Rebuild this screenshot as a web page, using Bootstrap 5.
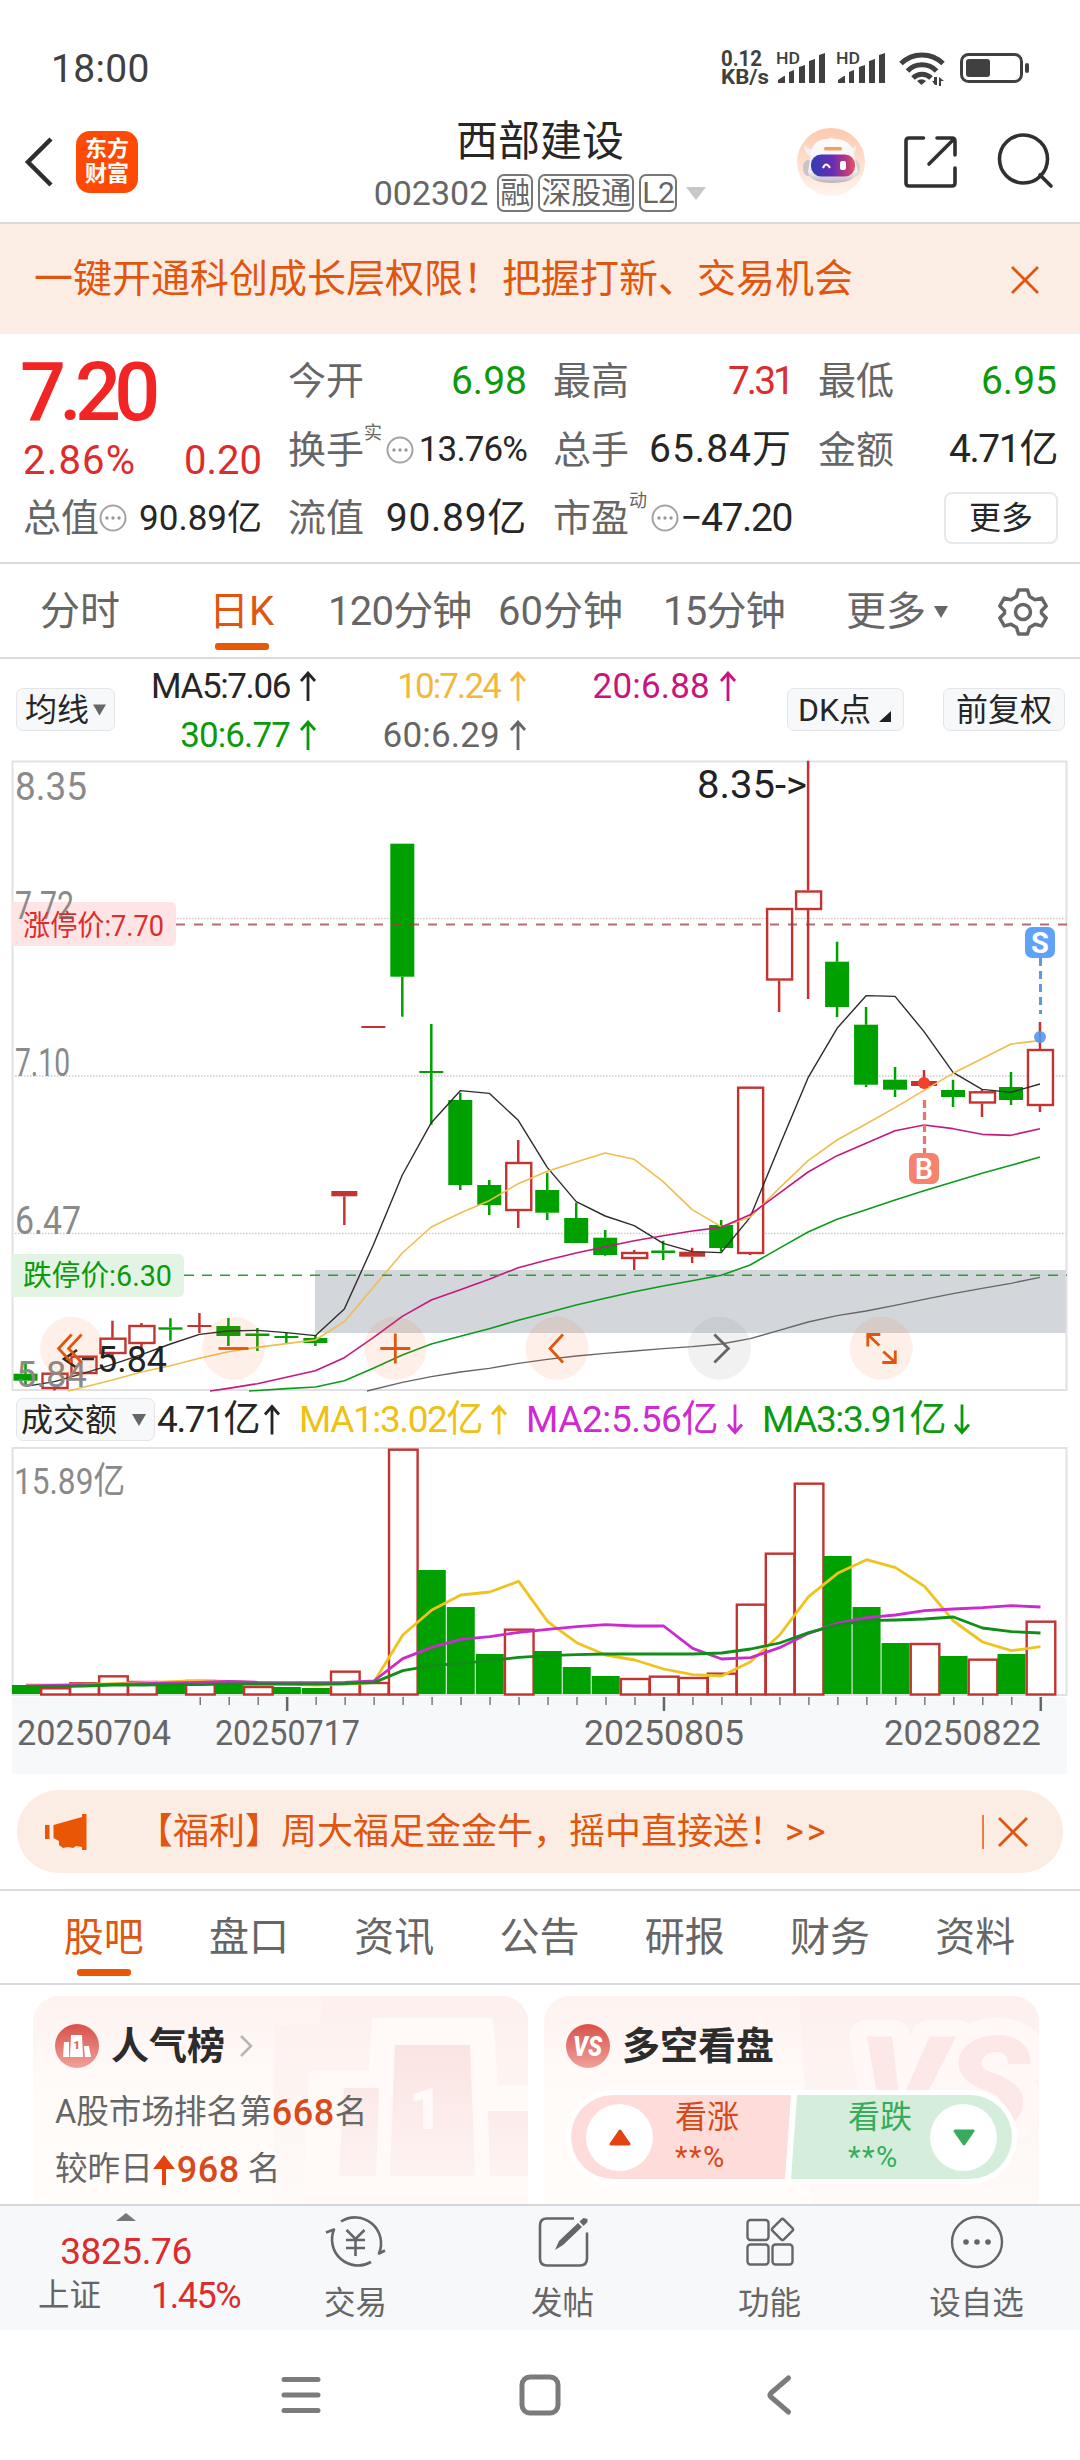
<!DOCTYPE html>
<html lang="zh-CN">
<head>
<meta charset="utf-8">
<meta name="viewport" content="width=device-width, initial-scale=1">
<title>西部建设 002302</title>
<link rel="stylesheet" href="https://cdn.jsdelivr.net/npm/bootstrap@5.3.0/dist/css/bootstrap.min.css">
<style>
:root{--or:#e0560f;--up:#dc2c2c;--dn:#0c9a0c;--ink:#262626;--gr:#666;--ln:#d9dadb}
html,body{margin:0;background:#fff}
body{font-family:Roboto,"Noto Sans CJK SC",sans-serif;color:var(--ink);line-height:1;width:1080px;overflow-x:hidden}
svg{display:block;flex:none}
svg text{font-family:Roboto,"Noto Sans CJK SC",sans-serif}
.screen{height:2460px;overflow:hidden}
.up{color:var(--up)}.dn{color:var(--dn)}.gr{color:var(--gr)}.or{color:var(--or)}
.statusbar{height:100px;padding:36px 40px 0 51px;color:#404040}
.clock{font-size:39px;letter-spacing:.3px;padding-top:2px}
.apphead{height:124px;display:grid;grid-template-columns:1fr auto 1fr;border-bottom:2px solid var(--ln);padding-top:2px}
.brand{width:62px;height:62px;border-radius:14px;background:#ff4a05;color:#fff;font-size:22px;font-weight:700;line-height:25px;text-align:center;padding-top:5px;margin-left:23px}
.stock{font-size:42px;height:48px;line-height:48px}
.code{font-size:34px}
.tagbox{border:2px solid #777;border-radius:7px;height:38px;font-size:30px;line-height:33px;padding:0 1px;color:var(--gr)}
.notice{height:110px;background:#fcede4;padding:1px 41px 0 34px;font-size:39px}
.quote{height:230px;padding:13px 23px 0 23px;gap:26px;border-bottom:2px solid var(--ln)}
.qcol{flex:1 1 0;min-width:0}
.qrow{height:68.5px;white-space:nowrap}
.qrow .k{font-size:38px;color:var(--gr)}
.qrow .v{font-size:39px}
.qrow .vs{font-size:35px}
.price{height:88px;font-size:81px;font-weight:500;color:#f22424;letter-spacing:-6.8px;line-height:92px;margin-left:-3px}
.chg{height:49px;font-size:40px;padding-top:3px}
.sup{font-size:18px;align-self:flex-start;margin-top:8px;color:var(--gr)}
.morebtn{width:114px;height:52px;border:2px solid #e6e8ea;border-radius:8px;font-size:32px;margin-right:-1px;margin-left:auto}
.periods{height:95px;border-bottom:2px solid var(--ln);font-size:40px;color:var(--gr);padding:3px 0 0 40px;white-space:nowrap}
.periods>*{position:relative}
.cur::after{content:"";position:absolute;left:50%;width:54px;height:7px;border-radius:3px;background:#e85806;transform:translateX(-50%)}
.periods .cur::after{bottom:-18px}
.malegend{height:101px;padding-left:16px;font-size:35px}
.chip{height:43px;border:1px solid #e3e5e8;border-radius:7px;background:#f7f8fa;font-size:32px;white-space:nowrap}
.magrid{display:grid;grid-template-columns:203px 210px 210px;grid-auto-rows:49px;padding-top:2px}
.magrid>div{display:flex;align-items:center;justify-content:flex-end;gap:8px}
.t7{letter-spacing:-1.4px}.t8{letter-spacing:.2px}
.volhead{height:55px;padding-left:16px;font-size:37px;white-space:nowrap}
.promo{margin:12px 17px 16px;height:83px;border-radius:42px;background:#fcede4;font-size:36px;padding:1px 35px 0 27px;white-space:nowrap}
.subtabs{height:96px;border-top:2px solid var(--ln);border-bottom:2px solid var(--ln);font-size:40px;color:var(--gr);padding:2px 32px 0 31px}
.subtabs>div{flex:1;text-align:center;position:relative}
.subtabs .cur::after{bottom:-18px}
.infos{height:219px;padding:11px 41px 0 33px;gap:16px;overflow:hidden}
.tile{flex:1;height:230px;border-radius:26px;position:relative;overflow:hidden;background:linear-gradient(#fef3f1,#fffbf9 45%,#fffcfa)}
.tile>.art{position:absolute;left:0;top:0}
.tile>div{position:relative}
.tiletitle{font-size:38px;font-weight:700;padding:28px 0 0 22px;height:72px;color:#2c2c2c}
.tline{font-size:32.6px;color:var(--gr);padding-left:22px;height:57px;white-space:nowrap}
.tline b{color:#d84a1b;font-size:36px;font-weight:500;letter-spacing:.5px}
.votes{margin:22px 22px 0;height:94px;border-radius:47px;background:#fff;padding:5px}
.half{height:84px;font-size:32px;line-height:40px}
.half.l{width:220px;border-radius:42px 0 0 42px;background:#fddcda;color:#d8481a;clip-path:polygon(0 0,100% 0,calc(100% - 6px) 100%,0 100%);padding-left:15px}
.half.r{width:221px;border-radius:0 42px 42px 0;background:#d5eedc;color:#37ac5c;clip-path:polygon(6px 0,100% 0,100% 100%,0 100%);padding-right:15px}
.half small{font-size:29px;display:block;letter-spacing:1.5px}
.knob{width:67px;height:67px;border-radius:50%;background:#fff}
.dock{height:126px;border-top:2px solid #d3d6da;background:#f7f8fa;font-size:31.5px;color:var(--gr)}
.dock .idx{width:252px}
.dock .it{width:207px;padding-top:8px}
.dock .it span{margin-top:18px}
.sysnav{height:130px;gap:183.5px}
</style>
</head>
<body>
<div class="screen d-flex flex-column">
  <div class="statusbar d-flex align-items-center justify-content-between flex-shrink-0">
    <span class="clock">18:00</span>
    <svg width="320" height="50" viewBox="720 43 320 50" fill="#404040">
      <g font-weight="700"><text x="721" y="66" font-size="22" textLength="41" lengthAdjust="spacingAndGlyphs">0.12</text><text x="721" y="84" font-size="21" textLength="48" lengthAdjust="spacingAndGlyphs">KB/s</text></g>
      <g id="sim"><text x="776" y="64" font-size="17" font-weight="500" textLength="24" lengthAdjust="spacingAndGlyphs">HD</text>
      <path d="M778 83v-3l6-4h1v7zM789 72l5-2v13h-5zM799 67l6-2v18h-6zM809 61l6-2v24h-6zM819 55l6-2v30h-6z"/></g>
      <use href="#sim" x="60"/>
      <g fill="none" stroke="#404040" stroke-width="5"><path d="M901 63.500a30 30 0 0 1 42 0"/><path d="M907.500 71a20 20 0 0 1 29 0"/><path d="M913 78a12.500 12.500 0 0 1 18 0"/></g>
      <path d="M917 81a7 7 0 0 1 9 0l-4.500 4z"/><path d="M932 81h2v-4h3v8h-2zM939 77l5 4h-3v5h-2z"/>
      <rect x="961.500" y="54.500" width="60" height="27" rx="7" fill="none" stroke="#404040" stroke-width="3"/><rect x="966" y="59" width="24" height="18" rx="3"/><rect x="1025" y="63" width="4" height="10" rx="2"/>
    </svg>
  </div>

  <header class="apphead flex-shrink-0">
    <div class="d-flex align-items-center ps-4">
      <svg width="29" height="50" viewBox="0 0 29 50" fill="none" stroke="#2e2e2e" stroke-width="4.500"><path d="M27 2L4 25l23 23"/></svg>
      <div class="brand">东方<br>财富</div>
    </div>
    <div class="d-flex flex-column align-items-center pt-3">
      <div class="stock">西部建设</div>
      <div class="d-flex align-items-center gr mt-2" style="gap:5px">
        <span class="code me-1">002302</span><span class="tagbox">融</span><span class="tagbox">深股通</span><span class="tagbox" style="letter-spacing:-.5px">L2</span>
        <svg width="20" height="13" viewBox="0 0 20 13" class="ms-1"><path d="M0 0h20L10 13z" fill="#c8c8c8"/></svg>
      </div>
    </div>
    <div class="d-flex align-items-center justify-content-end">
      <svg width="260" height="72" viewBox="794 126 260 72">
        <defs><linearGradient id="halo" x2="0" y2="1"><stop stop-color="#fdc9ad"/><stop offset="1" stop-color="#fff4ee"/></linearGradient>
        <linearGradient id="visor"><stop stop-color="#2f3fb0"/><stop offset=".5" stop-color="#6a2bb4"/><stop offset=".85" stop-color="#c43c7c"/><stop offset="1" stop-color="#e05a60"/></linearGradient>
        <linearGradient id="shell" x2="0" y2="1"><stop stop-color="#fdfdfe"/><stop offset=".75" stop-color="#f0edf0"/><stop offset="1" stop-color="#b9b4ba"/></linearGradient></defs>
        <circle cx="831" cy="162" r="34" fill="url(#halo)"/>
        <path d="M804 145c0 8 5 11 9 12l6-9c-7 2-12 1-15-3zM856 145c1 8-4 11-8 12l-6-9c7 2 11 1 14-3z" fill="#f3efef"/>
        <ellipse cx="808" cy="168" rx="5" ry="8" fill="#c9c4c8"/><ellipse cx="855" cy="168" rx="5" ry="8" fill="#d5d0d4"/>
        <path d="M810 160q0-21 18-21 3-2 6 0 20 0 21 21l3 12q-4 11-26 11t-24-11z" fill="url(#shell)"/>
        <rect x="824" y="147" width="18" height="3.500" rx="1.500" fill="#f0a25c"/>
        <rect x="811" y="154.500" width="44" height="22" rx="10" fill="url(#visor)"/>
        <path d="M823 168q3-7 7 0" fill="none" stroke="#fff" stroke-width="2"/><rect x="840" y="161" width="6" height="9" rx="2" fill="#fff"/>
        <g fill="none" stroke="#303030" stroke-width="3.600" stroke-linecap="round"><path d="M923.500 138H909q-3 0-3 3v42q0 3 3 3h43q3 0 3-3v-15M937 138h15q3 0 3 3v14M954 139l-25 25"/>
        <circle cx="1023.500" cy="159" r="24"/><path d="M1040 175l11 11"/></g>
      </svg>
      <span style="width:26px"></span>
    </div>
  </header>

  <div class="notice or d-flex align-items-center justify-content-between flex-shrink-0">
    <span>一键开通科创成长层权限！把握打新、交易机会</span>
    <svg width="28" height="28" viewBox="0 0 28 28" stroke="#e0560f" stroke-width="2.800"><path d="M1 1l26 26M27 1L1 27"/></svg>
  </div>

  <section class="quote d-flex flex-shrink-0">
    <div class="qcol">
      <div class="price">7.20</div>
      <div class="chg up d-flex justify-content-between align-items-center"><span style="letter-spacing:1.200px">2.86%</span><span>0.20</span></div>
      <div class="qrow d-flex align-items-center"><span class="k">总值</span><svg class="dots" width="28" height="28" viewBox="0 0 28 28"><use href="#more"/></svg><span class="vs ms-auto">90.89亿</span></div>
    </div>
    <div class="qcol">
      <div class="qrow d-flex align-items-center justify-content-between"><span class="k">今开</span><span class="v dn">6.98</span></div>
      <div class="qrow d-flex align-items-center"><span class="k">换手</span><span class="sup">实</span><svg width="28" height="28" viewBox="0 0 28 28" class="ms-1"><use href="#more"/></svg><span class="vs ms-auto" style="letter-spacing:-.9px">13.76%</span></div>
      <div class="qrow d-flex align-items-center justify-content-between"><span class="k">流值</span><span class="v" style="letter-spacing:.7px">90.89亿</span></div>
    </div>
    <div class="qcol">
      <div class="qrow d-flex align-items-center justify-content-between"><span class="k">最高</span><span class="v up" style="letter-spacing:-3px">7.31</span></div>
      <div class="qrow d-flex align-items-center justify-content-between"><span class="k">总手</span><span class="v" style="letter-spacing:1px">65.84万</span></div>
      <div class="qrow d-flex align-items-center"><span class="k">市盈</span><span class="sup">动</span><svg width="28" height="28" viewBox="0 0 28 28" class="ms-1"><use href="#more"/></svg><span class="v ms-auto t7">−47.20</span></div>
    </div>
    <div class="qcol">
      <div class="qrow d-flex align-items-center justify-content-between"><span class="k">最低</span><span class="v dn">6.95</span></div>
      <div class="qrow d-flex align-items-center justify-content-between"><span class="k">金额</span><span class="v t7">4.71亿</span></div>
      <div class="qrow d-flex align-items-center"><div class="morebtn d-flex align-items-center justify-content-center">更多</div></div>
    </div>
  </section>
  <svg width="0" height="0" class="position-absolute"><defs><g id="more"><circle cx="14" cy="14" r="12.500" fill="none" stroke="#a3a3a3" stroke-width="2"/><g fill="#999"><circle cx="8" cy="14" r="1.700"/><circle cx="14" cy="14" r="1.700"/><circle cx="20" cy="14" r="1.700"/></g></g></defs></svg>

  <nav class="periods d-flex align-items-center flex-shrink-0">
    <span style="width:169px">分时</span><span class="or cur" style="margin-right:54px">日K</span>
    <span style="width:170px;letter-spacing:-.8px">120分钟</span><span style="width:165px">60分钟</span><span style="width:183px;letter-spacing:-.8px">15分钟</span><span>更多</span>
    <svg width="14" height="12" viewBox="0 0 14 12" class="ms-2"><path d="M0 0h14L7 12z" fill="#666"/></svg>
    <svg width="50" height="50" viewBox="-25 -25 50 50" style="margin-left:50px" fill="none" stroke="#666" stroke-width="3.500" stroke-linejoin="round"><path d="M-4.500-22h9l2 6.500 5.500 3.200 6.700-1.600 4.500 7.900-4.700 4.800v2.400l4.700 4.800-4.500 7.900-6.700-1.600-5.500 3.200-2 6.500h-9l-2-6.500-5.500-3.200-6.700 1.600-4.500-7.900 4.700-4.800v-2.400l-4.700-4.800 4.500-7.900 6.700 1.600 5.500-3.200z"/><circle r="7.500"/></svg>
  </nav>

  <div class="malegend d-flex align-items-center flex-shrink-0">
    <div class="chip d-flex align-items-center" style="width:99px;padding-left:8px">均线<svg width="13" height="12" viewBox="0 0 14 12" class="ms-1"><path d="M0 0h14L7 12z" fill="#666"/></svg></div>
    <div class="magrid">
      <div><span class="t7">MA5:7.06</span><svg width="20" height="30" viewBox="0 0 20 30"><use href="#arr"/></svg></div>
      <div style="color:#f3b73c"><span style="letter-spacing:-1.900px">10:7.24</span><svg width="20" height="30" viewBox="0 0 20 30"><use href="#arr"/></svg></div>
      <div style="color:#c9147e"><span class="t8">20:6.88</span><svg width="20" height="30" viewBox="0 0 20 30"><use href="#arr"/></svg></div>
      <div class="dn"><span style="letter-spacing:-.9px">30:6.77</span><svg width="20" height="30" viewBox="0 0 20 30"><use href="#arr"/></svg></div>
      <div class="gr"><span class="t8">60:6.29</span><svg width="20" height="30" viewBox="0 0 20 30"><use href="#arr"/></svg></div>
    </div>
    <div class="chip d-flex align-items-center" style="width:117px;margin-left:49px;padding-left:10px">DK点<svg width="12" height="11" viewBox="0 0 12 11" class="align-self-end mb-2 ms-2"><path d="M12 0v11H0z" fill="#222"/></svg></div>
    <div class="chip d-flex align-items-center justify-content-center" style="width:122px;margin-left:39px">前复权</div>
  </div>
  <svg width="0" height="0" class="position-absolute"><defs><path id="arr" d="M10 30V2M3 10l7-8 7 8" fill="none" stroke="currentColor" stroke-width="2.800"/></defs></svg>

  <svg id="kchart" class="flex-shrink-0" width="1080" height="632" viewBox="0 760 1080 632"></svg>

  <div class="volhead d-flex align-items-center flex-shrink-0">
    <div class="chip d-flex align-items-center" style="width:139px;padding-left:4px">成交额<svg width="14" height="12" viewBox="0 0 14 12" style="margin-left:15px"><path d="M0 0h14L7 12z" fill="#666"/></svg></div>
    <span style="width:105px;margin-left:2px" class="t7">4.71亿</span><svg width="20" height="31" viewBox="0 0 20 30"><use href="#arr"/></svg>
    <span class="d-flex align-items-center justify-content-between" style="width:210px;margin-left:17px;color:#edc214"><span class="t7">MA1:3.02亿</span><svg width="20" height="31" viewBox="0 0 20 30"><use href="#arr"/></svg></span>
    <span class="d-flex align-items-center justify-content-between" style="width:219px;margin-left:17px;color:#cf2ad2"><span style="letter-spacing:-.4px">MA2:5.56亿</span><svg width="20" height="31" viewBox="0 0 20 30"><use href="#arr" transform="rotate(180 10 15)"/></svg></span>
    <span class="d-flex align-items-center justify-content-between dn" style="width:210px;margin-left:17px"><span class="t7">MA3:3.91亿</span><svg width="20" height="31" viewBox="0 0 20 30"><use href="#arr" transform="rotate(180 10 15)"/></svg></span>
  </div>

  <svg id="vchart" class="flex-shrink-0" width="1080" height="331" viewBox="0 1447 1080 331"></svg>

  <div class="promo or d-flex align-items-center flex-shrink-0">
    <svg width="43" height="38" viewBox="44 1813 43 38" fill="#e95606"><path d="M45 1825h4.500v14H45zM53.500 1825L82 1817v-3h4.500v36H82v-3l-6-1-3 2-5-1-5 1-4-3v-4l-5.500-3z"/></svg>
    <span style="margin-left:50px">【福利】周大福足金金牛，摇中直接送！<span style="letter-spacing:3px">&gt;&gt;</span></span>
    <svg class="ms-auto" width="46" height="34" viewBox="0 0 46 34" stroke="#e0560f"><path d="M1 0v34" stroke-width="1.500"/><path d="M17 3l28 28M45 3L17 31" stroke-width="2.800"/></svg>
  </div>

  <nav class="subtabs d-flex align-items-center flex-shrink-0">
    <div class="or cur">股吧</div><div>盘口</div><div>资讯</div><div>公告</div><div>研报</div><div>财务</div><div>资料</div>
  </nav>

  <section class="infos d-flex flex-shrink-0">
    <div class="tile">
      <svg class="art" width="495" height="209" viewBox="33 1996 495 209">
        <defs><linearGradient id="fa" x2="0" y2="1"><stop stop-color="#fdf0ee"/><stop offset="1" stop-color="#fefaf8"/></linearGradient><linearGradient id="fb" x2="0" y2="1"><stop stop-color="#fae4e3"/><stop offset="1" stop-color="#fdf3f1"/></linearGradient></defs>
        <path d="M275 2025l45-1 2-28h206v209H272z" fill="url(#fa)"/><path d="M309 2071h60l3-53h121l5 67h30v120H304z" fill="#fff9f7"/>
        <path d="M344 2088h35l-3 88h-37zM395 2045h75l5 131h-85zM488 2111h40v65h-38z" fill="url(#fb)"/><text x="409" y="2129" font-size="58" font-weight="900" fill="#fffaf9">1</text>
      </svg>
      <div class="tiletitle d-flex align-items-center">
        <svg width="44" height="44" viewBox="0 0 44 44"><defs><linearGradient id="bd" x2="0" y2="1"><stop stop-color="#d9504b"/><stop offset="1" stop-color="#f0a19a"/></linearGradient></defs><circle cx="22" cy="22" r="22" fill="url(#bd)"/><path d="M9 18h5v15H8zM16 11h11l1 22H15zM29 22h5l2 11h-6z" fill="#fff"/><text x="18.500" y="25" font-size="11" font-weight="900" fill="#d9605b">1</text></svg>
        <span style="margin-left:12px">人气榜</span>
        <svg width="14" height="22" viewBox="0 0 14 22" fill="none" stroke="#b5b5b5" stroke-width="2.500" style="margin-left:14px"><path d="M2 1l10 10L2 21"/></svg>
      </div>
      <div class="tline d-flex align-items-center" style="margin-top:16px"><span>A股市场排名第</span><b>668</b><span>名</span></div>
      <div class="tline d-flex align-items-center"><span>较昨日</span><svg width="22" height="30" viewBox="0 0 22 30"><path d="M11 0l11 14h-9v16H9V14H0z" fill="#e2430f"/></svg><b style="margin:0 8px 0 2px">968</b><span>名</span></div>
    </div>
    <div class="tile">
      <svg class="art" width="495" height="209" viewBox="544 1996 495 209">
        <path d="M799 1996h240v209H812z" fill="url(#fa)"/>
        <text x="858" y="2130" font-size="132" font-weight="900" font-style="italic" textLength="172" lengthAdjust="spacingAndGlyphs" stroke="#fff8f7" stroke-width="34" stroke-linejoin="round" paint-order="stroke" fill="#fce8e7">VS</text>
      </svg>
      <div class="tiletitle d-flex align-items-center">
        <svg width="44" height="44" viewBox="0 0 44 44"><circle cx="22" cy="22" r="22" fill="url(#bd)"/><text x="7" y="32" font-size="28" font-weight="900" font-style="italic" textLength="29" lengthAdjust="spacingAndGlyphs" fill="#fff">VS</text></svg>
        <span style="margin-left:12px">多空看盘</span>
      </div>
      <div class="votes d-flex">
        <div class="half l d-flex align-items-center"><span class="knob d-flex align-items-center justify-content-center"><svg width="22" height="17" viewBox="0 0 22 17"><path d="M11 2l9 13H2z" fill="#e2430f" stroke="#e2430f" stroke-width="3" stroke-linejoin="round"/></svg></span><span style="margin-left:22px">看涨<small>**%</small></span></div>
        <div class="half r d-flex align-items-center justify-content-end"><span style="margin-right:18px">看跌<small>**%</small></span><span class="knob d-flex align-items-center justify-content-center"><svg width="22" height="17" viewBox="0 0 22 17"><path d="M11 15l9-13H2z" fill="#37ac5c" stroke="#37ac5c" stroke-width="3" stroke-linejoin="round"/></svg></span></div>
      </div>
    </div>
  </section>

  <nav class="dock d-flex flex-shrink-0">
    <div class="idx d-flex flex-column align-items-center">
      <svg width="20" height="8" viewBox="0 0 20 8" style="margin-top:7px"><path d="M10 0l10 8H0z" fill="#777"/></svg>
      <span class="up" style="font-size:37px;margin-top:12px;letter-spacing:-.4px">3825.76</span>
      <div class="d-flex align-items-center justify-content-between align-self-end" style="width:202px;margin-top:8px;margin-right:12px"><span>上证</span><span class="up" style="font-size:36px;letter-spacing:-1.500px">1.45%</span></div>
    </div>
    <div class="it d-flex flex-column align-items-center"><svg width="64" height="56" viewBox="324 2214 64 56" fill="none" stroke="#666" stroke-width="2.600"><path d="M341 2221.500a26 26 0 0 1 38 32l6-3M371 2262a26 26 0 0 1-37-32.500l-8 3" stroke-linejoin="round"/><path d="M346.500 2230l9 9 9-9M346 2240h19M346 2248h19M355.500 2239v17"/></svg><span>交易</span></div>
    <div class="it d-flex flex-column align-items-center"><svg width="56" height="56" viewBox="534 2214 56 56"><path d="M573 2218.500h-27q-7 0-7 7v33q0 7 7 7h33q7 0 7-7v-26" fill="none" stroke="#666" stroke-width="2.600"/><path d="M554 2250l4-9 19-18 4 4-19 18zM578.500 2221.500l4-3.500 4 1v3l-4 4z" fill="#666"/></svg><span>发帖</span></div>
    <div class="it d-flex flex-column align-items-center"><svg width="56" height="56" viewBox="741 2214 56 56" fill="none" stroke="#666" stroke-width="2.400"><rect x="746.500" y="2220" width="21" height="20" rx="3"/><rect x="746.500" y="2244.500" width="21" height="20" rx="3"/><rect x="771.500" y="2244.500" width="20" height="20" rx="3"/><rect x="773.500" y="2221.500" width="16" height="16" rx="2" transform="rotate(45 781.500 2229.500)"/></svg><span>功能</span></div>
    <div class="it d-flex flex-column align-items-center"><svg width="56" height="56" viewBox="-28 -28 56 56"><circle r="25" fill="none" stroke="#666" stroke-width="2.400"/><g fill="#666"><circle cx="-11" r="2.800"/><circle r="2.800"/><circle cx="11" r="2.800"/></g></svg><span>设自选</span></div>
  </nav>

  <div class="sysnav d-flex align-items-center justify-content-center flex-shrink-0">
    <svg width="56" height="56" viewBox="-28 -28 56 56" stroke="#7b7b7b" stroke-width="5" stroke-linecap="round"><path d="M-17-15.500h34M-17 0h34M-17 15.500h34"/></svg>
    <svg width="56" height="56" viewBox="-28 -28 56 56" fill="none" stroke="#7b7b7b" stroke-width="5"><rect x="-18" y="-18" width="36" height="36" rx="8"/></svg>
    <svg width="56" height="56" viewBox="-27 -28 56 56" fill="none" stroke="#7b7b7b" stroke-width="5" stroke-linecap="round" stroke-linejoin="round"><path d="M9.500-17L-8-2q-2 2 0 4L9.500 17"/></svg>
  </div>
</div>

<script src="https://cdn.jsdelivr.net/npm/bootstrap@5.3.0/dist/js/bootstrap.bundle.min.js"></script>
<script>
const RED='#c53331',GREEN='#00a000',X0=25.5,STEP=28.985;
const cx=i=>X0+STEP*i;
const line=(a,c,w)=>`<polyline fill="none" stroke="${c}" stroke-width="${w}" stroke-linejoin="round" points="${a.map(p=>p.join(',')).join(' ')}"/>`;
// candles: type (g falling, r rising), wick top, body top, body bottom, wick bottom
const candles=[['g',1362.7,1373.7,1380.7,1385],['r',1372.7,1372.7,1389,1390.5],['r',1355.7,1355.7,1374,1374],['r',1320.7,1337.7,1354,1358],['r',1323,1325,1344,1350],['g',1318.3,1327.3,1329.7,1340.7],['r',1313,1325,1327,1333],['g',1318,1326,1336,1346],['g',1328,1333.5,1336,1351],['g',1333,1336,1338,1343],['g',1335,1338,1343,1346],['r',1191,1191,1196.3,1225],['r',1026,1026,1028,1028],['g',843.7,843.7,976.7,1016.7],['g',1024,1071,1073,1124.7],['g',1092.7,1100,1185,1190],['g',1180,1185,1205,1215],['r',1140,1162,1211,1228],['g',1172.7,1190,1212.7,1220],['g',1202.7,1218,1243,1243],['g',1230,1237.7,1255,1255.7],['r',1250,1252,1259,1270],['g',1240.7,1250.500,1253,1260],['r',1247.7,1251.7,1256.7,1263],['g',1220,1225,1248,1251.7],['r',1086.7,1086.7,1254,1255],['r',908,908,980.5,1012],['r',760.7,890.5,910,999],['g',941.7,961.7,1007,1017],['g',1007,1024.7,1084.7,1087],['g',1067,1079.7,1089.7,1097],['r',1070,1081,1086,1088],['g',1079.7,1090,1097,1107],['r',1090,1091.3,1103.5,1117],['g',1072,1087,1100,1105],['r',1022,1049,1106,1112]];
// moving averages in chart units, starting at the given candle
const q=(s,a)=>a.map((v,k)=>[cx(s+k),980+v/3]);
const ma5=q(0,[1219,1205,1180,1153,1124,1092,1063,1053,1051,1058,1067,987,795,585,428,332,340,421,562,665,708,737,790,815,818,712,500,293,145,47,49,155,277,328,337,312]);
const ma10=[[68,1391],...q(2,[1222,1200,1176,1157,1135,1115,1102,1091,1080,1025,922,819,741,699,662,611,574,546,519,538,605,689,740,712,625,542,480,432,383,331,280,236,192,182])];
const ma20=[[210,1391],...q(7,[1225,1211,1192,1172,1133,1073,1009,960,929,898,863,840,819,800,782,767,753,742,704,640,576,527,490,452,435,446,463,466,446])];
const ma30=[[249,1391],...q(9,[1226,1221,1202,1165,1125,1092,1069,1046,1021,998,975,955,935,918,902,886,855,805,756,718,689,660,632,606,580,556,531])];
const ma60=[[367,1391],...q(13,[1207,1190,1176,1165,1150,1138,1128,1120,1113,1106,1100,1092,1076,1051,1026,1007,993,976,958,941,925,910,892])];
let k='';
k+='<rect x="315" y="1270" width="752" height="63" fill="#d3d6db"/>';
for(const y of [918.5,1076,1233.5])k+=`<path d="M12 ${y}H1067" stroke="#ccc" stroke-width="1.500" stroke-dasharray="1.500 1.500"/>`;
k+='<rect x="12.5" y="761.5" width="1054" height="628.5" fill="none" stroke="#e1e1e3" stroke-width="2"/>';
candles.forEach(([t,a,b,c,d],i)=>{const x=cx(i),col=t=='g'?GREEN:RED,h=c-b;
  k+=`<path d="M${x} ${a}V${b}M${x} ${c}V${d}" stroke="${col}" stroke-width="2.5"/>`;
  if(t=='g'||h<6)k+=`<rect x="${x-(t=='g'||h<3?12:13)}" y="${b}" width="${t=='g'||h<3?24:26}" height="${h}" fill="${col}"/>`;
  else k+=`<rect x="${x-12}" y="${b+1}" width="25" height="${h-2}" fill="#fff" stroke="${col}" stroke-width="2.4"/>`;});
k+=line(ma5,'#2c2c2c',1.4)+line(ma10,'#f0bd4e',1.6)+line(ma20,'#c5187f',1.6)+line(ma30,'#0d9a1c',1.6)+line(ma60,'#666',1.4);
const lab=(x,y,w,t,c,s=35)=>`<text x="${x}" y="${y}" font-size="${s}" textLength="${w}" lengthAdjust="spacingAndGlyphs" fill="${c}">${t}</text>`;
k+='<path d="M12 902h158q6 0 6 6v32q0 6-6 6H12z" fill="#fee4e4"/><path d="M12 1254h166q6 0 6 6v31q0 6-6 6H12z" fill="#e3f4e4"/>';
k+=lab(15,800,72,'8.35','#8a8a8a',38)+lab(15,919,59,'7.72','#8a8a8a',38)+lab(15,1076,55,'7.10','#8a8a8a',38)+lab(15,1234,66,'6.47','#8a8a8a',38);
k+='<path d="M176 924.500H1067" stroke="#a33a42" stroke-opacity=".75" stroke-width="1.800" stroke-dasharray="9 9"/><path d="M184 1275.300H1067" stroke="#28a035" stroke-width="1.600" stroke-dasharray="10 8"/>';
k+=lab(23,936,141,'涨停价:7.70','#dc2c2c',29)+lab(23,1286,149,'跌停价:6.30','#0c9a0c',29);
k+=lab(697,798,110,'8.35-&gt;','#222',38);
// trade markers
k+='<path d="M1040.500 958v56" stroke="#5a9be8" stroke-width="3" stroke-dasharray="8 5"/><circle cx="1040" cy="1037" r="6" fill="#5596f0" fill-opacity=".9"/><rect x="1025" y="927" width="30" height="31" rx="7" fill="#5ea2fa"/><text x="1040" y="952.500" font-size="29" font-weight="700" fill="#fff" text-anchor="middle">S</text>';
k+='<path d="M924.500 1100v53" stroke="#e57668" stroke-width="3.200" stroke-dasharray="8 4"/><circle cx="924" cy="1083" r="6" fill="#f2402c"/><rect x="909" y="1153" width="30" height="31" rx="7" fill="#f7836f"/><text x="924" y="1178.500" font-size="29" font-weight="500" fill="#fff" text-anchor="middle">B</text>';
k+=lab(97,1372,70,'5.84','#222',37)+'<path d="M77 1350l-13 9 13 9M82 1359h12" fill="none" stroke="#222" stroke-width="2.600"/>'+lab(16,1387,71,'5.84','#8a8a8a',37);
// floating chart controls
const ctl=(x,d,c='#e0560f',b='#f46a22',o=.1)=>`<circle cx="${x}" cy="1348.300" r="31.500" fill="${b}" fill-opacity="${o}"/><path transform="translate(${x} 1348.500)" d="${d}" fill="none" stroke="${c}" stroke-width="2.800"/>`;
k+=ctl(71.6,'M0-14L-13 0 0 14M10-14L-3 0 10 14')+ctl(233.5,'M-15 0H15')+ctl(395.3,'M-15 0H15M0-15V15')+ctl(557,'M6-14L-7 0 6 14')+ctl(719.4,'M-5-14L9 0-5 14','#666','#777',.1)+ctl(881.3,'M-13.500-2V-14H-1M-13.500-14L-2-3M14 2V14H1M14 14L2 3');
document.getElementById('kchart').innerHTML=k;

// turnover panel
const vols='g915 r922 r907 r886 r903 g908 r900 g912 r918 g921 g924 r872 r906 r206 g570 g681 g822 r746 g813 g861 g888 r894 r887 r891 r878 r671 r518 r308 g528 g681 g789 r789 g828 r836 g822 r722'.split(' ');
const vy=v=>1380+v/3,pv=a=>a.map((v,i)=>[cx(i)+.5,vy(v)]);
let s='<rect x="12" y="1697" width="1055" height="77" fill="#f7f8fa"/><rect x="12.5" y="1448" width="1054" height="247" fill="none" stroke="#e1e1e3" stroke-width="2"/>';
vols.forEach((t,i)=>{const v=vy(+t.slice(1)),x=12+STEP*i;
  s+=t[0]=='g'?`<rect x="${x}" y="${v}" width="28" height="${1694-v}" fill="${GREEN}"/>`:`<rect x="${x+.2}" y="${v+1}" width="28.6" height="${1693.5-v}" fill="#fff" stroke="${RED}" stroke-width="2.4"/>`;});
s+=line(pv([915,915,914,911,908,905,902,904,908,912,915,913,907,765,690,645,636,604,725,788,825,840,867,884,888,845,765,650,580,539,563,619,723,786,812,800]),'#efc31e',2.8);
s+=line(pv([918,916,915,913,911,909,907,904,907,908,908,907,903,836,802,778,770,757,748,740,734,738,738,805,837,833,803,760,730,713,705,692,687,683,677,681]),'#c92bce',2.8);
s+=line(pv([920,920,918,915,915,914,914,912,912,912,912,911,908,872,857,850,842,832,827,824,822,822,822,822,819,807,789,758,735,722,720,717,711,744,755,759]),'#0f8f18',2.8);
s+=lab(14,1494,111,'15.89亿','#8a8a8a',37);
for(let i=6;i<36;i++){const m=i==9||i==22||i==35;s+=`<path d="M${cx(i)+.8} 1697V${m?1711:1705}" stroke="#666" stroke-width="${m?2.5:1.3}"/>`;}
s+=lab(17,1745,154,'20250704','#666',35)+lab(215,1745,145,'20250717','#666',35)+lab(584,1745,160,'20250805','#666',35)+lab(884,1745,157,'20250822','#666',35);
document.getElementById('vchart').innerHTML=s;
</script>
</body>
</html>
